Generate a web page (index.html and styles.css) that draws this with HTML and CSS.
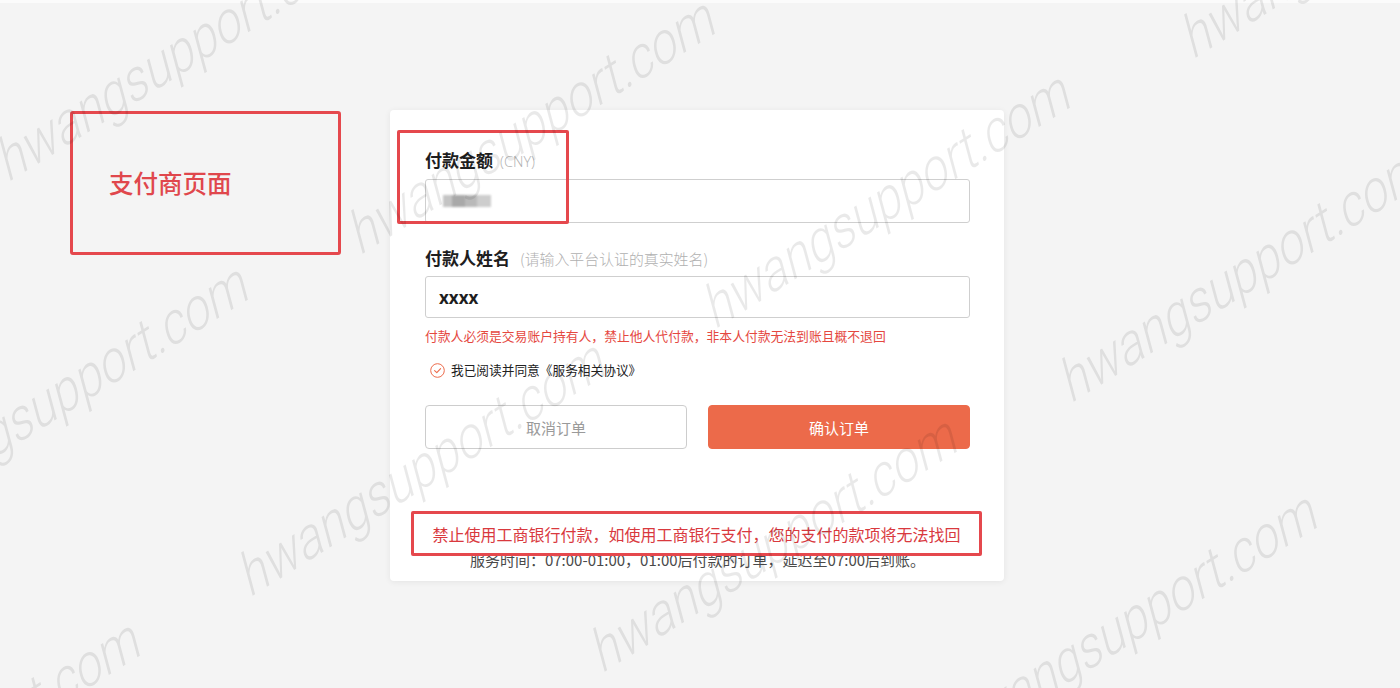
FILE: index.html
```html
<!DOCTYPE html>
<html lang="zh-CN">
<head>
<meta charset="utf-8">
<title>支付商页面</title>
<link rel="stylesheet" href="styles.css">
</head>
<body>
<div class="topstrip"></div>
<div class="page">
  <div class="tag-box"><span class="tag-text">支付商页面</span></div>

  <div class="card">
    <div class="field">
      <div class="label-row"><span class="label">付款金额</span><span class="hint hint-cny">(CNY)</span></div>
      <div class="input input-amount"><span class="blurred"></span></div>
    </div>

    <div class="field field-name">
      <div class="label-row"><span class="label">付款人姓名</span><span class="hint hint-name">(请输入平台认证的真实姓名)</span></div>
      <div class="input input-name"><span class="name-value">xxxx</span></div>
    </div>

    <p class="warning">付款人必须是交易账户持有人，禁止他人代付款，非本人付款无法到账且概不退回</p>

    <div class="agree">
      <svg class="check" width="15" height="15" viewBox="0 0 15 15" aria-hidden="true">
        <circle cx="7.5" cy="7.5" r="6.8" fill="none" stroke="#ec6a4a" stroke-width="1"/>
        <path d="M4.6 7.6 L6.8 9.7 L10.6 5.6" fill="none" stroke="#ec6a4a" stroke-width="1.1" stroke-linecap="round" stroke-linejoin="round"/>
      </svg>
      <span class="agree-text">我已阅读并同意《服务相关协议》</span>
    </div>

    <div class="buttons">
      <button class="btn btn-cancel">取消订单</button>
      <button class="btn btn-confirm">确认订单</button>
    </div>

    <p class="service">服务时间：07:00-01:00，01:00后付款的订单，延迟至07:00后到账。</p>

    <div class="mark mark-amount"></div>
    <div class="mark mark-notice">禁止使用工商银行付款，如使用工商银行支付，您的支付的款项将无法找回</div>
  </div>
</div>

<div class="watermarks" aria-hidden="true">
  <span class="wm" style="left:8px;top:185px">hwangsupport.com</span>
  <span class="wm" style="left:360px;top:258px">hwangsupport.com</span>
  <span class="wm" style="left:715px;top:332px">hwangsupport.com</span>
  <span class="wm" style="left:1071px;top:406px">hwangsupport.com</span>
  <span class="wm" style="left:1193px;top:62px">hwangsupport.com</span>
  <span class="wm" style="left:-107px;top:524px">hwangsupport.com</span>
  <span class="wm" style="left:250px;top:600px">hwangsupport.com</span>
  <span class="wm" style="left:602px;top:676px">hwangsupport.com</span>
  <span class="wm" style="left:-215px;top:880px">hwangsupport.com</span>
  <span class="wm" style="left:962px;top:752px">hwangsupport.com</span>
</div>
</body>
</html>
```

FILE: styles.css
```css
* { box-sizing: border-box; }

html, body {
  margin: 0;
  padding: 0;
  height: 100%;
}

body {
  background: #f4f4f4;
  font-family: "Noto Sans CJK SC", "Noto Sans", sans-serif;
  color: #222;
  position: relative;
  overflow: hidden;
}

.topstrip {
  height: 3px;
  background: #fbfbfb;
}

.page {
  display: flex;
  align-items: flex-start;
  padding: 107px 0 0 70px;
  gap: 49px;
}

/* left annotation */
.tag-box {
  margin-top: 1px;
  width: 271px;
  height: 144px;
  border: 3px solid #e5484d;
  border-radius: 3px;
  display: flex;
  align-items: center;
  padding-left: 36px;
}

.tag-text {
  font-size: 24.5px;
  line-height: 30px;
  color: #e0474c;
  font-weight: 500;
}

/* card */
.card {
  position: relative;
  width: 614px;
  background: #fff;
  border-radius: 4px;
  box-shadow: 0 1px 6px rgba(0, 0, 0, 0.07);
  padding: 38px 34px 11px 35px;
}

.label-row {
  display: flex;
  align-items: baseline;
  height: 24px;
  line-height: 24px;
}

.label {
  font-size: 17px;
  font-weight: 700;
  color: #1e1e1e;
}

.hint {
  color: #b0b0b0;
  font-weight: 300;
}

.hint-cny {
  margin-left: 7px;
  font-family: "Open Sans", "Noto Sans", sans-serif;
  font-size: 14.5px;
}

.hint-name {
  margin-left: 10px;
  font-size: 14.9px;
}

.input {
  margin-top: 7px;
  width: 100%;
  border: 1px solid #cfcfcf;
  border-radius: 3px;
  display: flex;
  align-items: center;
}

.input-amount {
  height: 44px;
  padding-left: 17px;
}

.blurred {
  display: block;
  width: 48px;
  height: 12px;
  background: linear-gradient(90deg, #c4c4c4 0 18%, #a9a9a9 18% 45%, #b9b9b9 45% 70%, #cdcdcd 70% 100%);
  filter: blur(1px);
}

.field-name {
  margin-top: 23px;
}

.input-name {
  margin-top: 6px;
  height: 42px;
  padding-left: 13px;
}

.name-value {
  font-family: "Noto Sans", "Liberation Sans", sans-serif;
  font-size: 17px;
  font-weight: 700;
  color: #1e1e1e;
}

.warning {
  margin: 9px 0 0;
  font-size: 12.8px;
  line-height: 18px;
  color: #e5483f;
  white-space: nowrap;
}

.agree {
  margin-top: 15px;
  height: 20px;
  display: flex;
  align-items: center;
  padding-left: 5px;
  gap: 6px;
}

.check { display: block; flex: none; }

.agree-text {
  font-size: 12.7px;
  line-height: 20px;
  color: #222;
}

.buttons {
  margin-top: 25px;
  display: flex;
  gap: 21px;
}

.btn {
  flex: 1;
  height: 44px;
  border-radius: 4px;
  font-family: "Noto Sans CJK SC", sans-serif;
  font-size: 15px;
  padding: 0;
}

.btn-cancel {
  background: #fff;
  border: 1px solid #cdcdcd;
  color: #9a9a9a;
}

.btn-confirm {
  background: #ec6a4a;
  border: 1px solid #ec6a4a;
  color: #fff;
}

.service {
  margin: 101px 0 0;
  text-align: center;
  font-size: 15px;
  line-height: 20px;
  color: #4a4a4a;
  white-space: nowrap;
}

/* annotations drawn over the card */
.mark {
  position: absolute;
  border: 3px solid #e5484d;
  border-radius: 2px;
}

.mark-amount {
  left: 7px;
  top: 20px;
  width: 172px;
  height: 94px;
}

.mark-notice {
  left: 21px;
  top: 401px;
  width: 571px;
  height: 45px;
  display: flex;
  align-items: center;
  justify-content: center;
  font-size: 16px;
  color: #d9393e;
  white-space: nowrap;
}

/* watermark layer */
.watermarks {
  position: absolute;
  inset: 0;
  overflow: hidden;
  pointer-events: none;
  z-index: 10;
}

.wm {
  position: absolute;
  margin-top: -46px;
  font-family: "Roboto", "Open Sans", sans-serif;
  font-weight: 300;
  font-size: 52px;
  line-height: 54px;
  color: rgba(0, 0, 0, 0.085);
  white-space: nowrap;
  transform-origin: 0 46px;
  transform: rotate(-32deg) skewX(-17deg) scale(0.95, 1.1);
}
```
